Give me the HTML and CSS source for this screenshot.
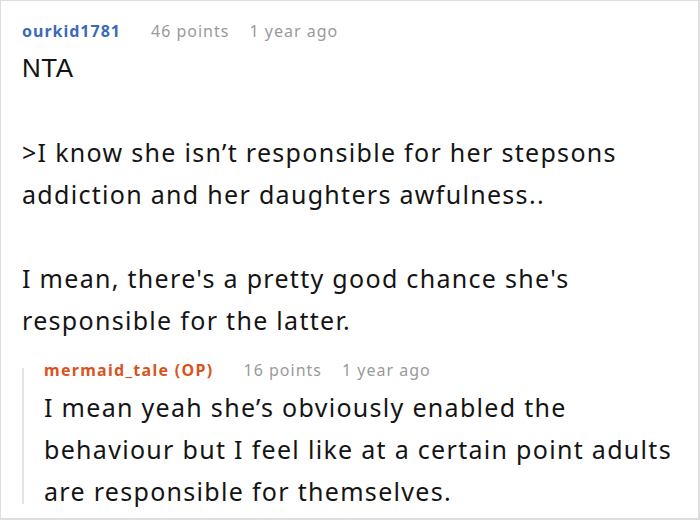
FILE: index.html
```html
<!DOCTYPE html>
<html>
<head>
<meta charset="utf-8">
<link rel="stylesheet" href="styles.css">
</head>
<body>
<div class="frame">
  <div class="comment">
    <div class="meta">
      <span class="author">ourkid1781</span>
      <span class="info">46 points</span>
      <span class="info">1 year ago</span>
    </div>
    <div class="text">
      <p class="nta">NTA</p>
      <p>&gt;I know she isn’t responsible for her stepsons addiction and her daughters awfulness..</p>
      <p>I mean, there's a pretty good chance she's responsible for the latter.</p>
    </div>
    <div class="reply">
      <div class="meta">
        <span class="author op">mermaid_tale (OP)</span>
        <span class="info">16 points</span>
        <span class="info">1 year ago</span>
      </div>
      <div class="text">
        <p>I mean yeah she’s obviously enabled the behaviour but I feel like at a certain point adults are responsible for themselves.</p>
      </div>
    </div>
  </div>
</div>
</body>
</html>
```
FILE: styles.css
```css
html, body {
  margin: 0;
  padding: 0;
  background: #fff;
}
body {
  font-family: "Noto Sans", "Open Sans", sans-serif;
  color: #141414;
}
.frame {
  box-sizing: border-box;
  width: 700px;
  height: 520px;
  border: 1px solid #dedede;
  border-right-width: 2px;
  border-bottom-width: 2px;
  overflow: hidden;
}
.comment {
  padding: 14px 20px 0 21px;
}
.meta {
  display: flex;
  gap: 20px;
  font-size: 16px;
  line-height: 32px;
  letter-spacing: 1px;
}
.author {
  font-weight: 700;
  color: #3b6ab8;
  margin-right: 10px;
}
.author.op {
  color: #d9531f;
  letter-spacing: 1.3px;
}
.info {
  color: #9a9a9a;
}
.text {
  font-size: 25px;
  line-height: 42px;
  letter-spacing: 1.3px;
}
.text p {
  margin: 0 0 42px;
}
.text p:last-child {
  margin-bottom: 0;
}
.text .nta {
  font-family: "Liberation Sans", Arial, sans-serif;
  font-size: 26px;
  letter-spacing: 0.5px;
}
.reply {
  position: relative;
  margin-top: 13px;
  padding-left: 22px;
}
.reply::before {
  content: "";
  position: absolute;
  left: 0;
  top: 14px;
  bottom: 8px;
  width: 2px;
  background: #e4e4e4;
}
```
